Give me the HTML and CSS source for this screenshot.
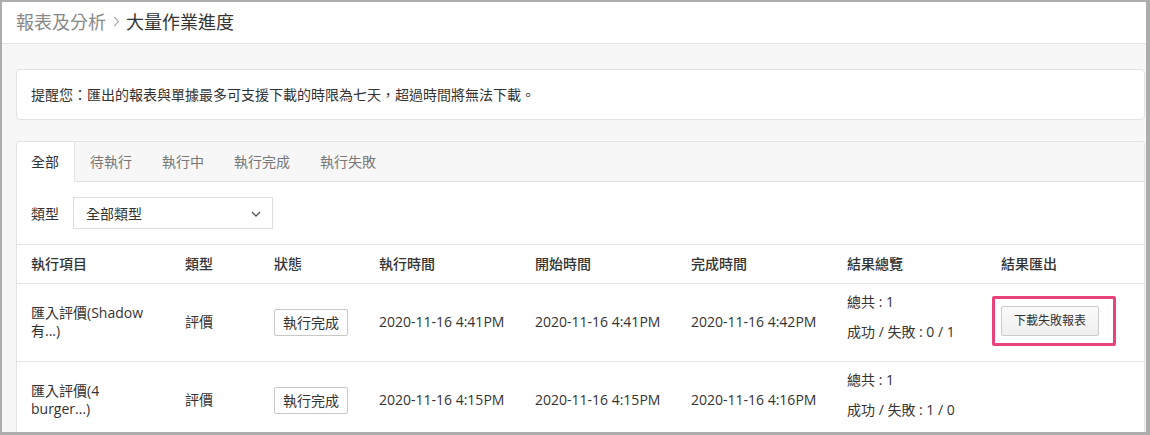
FILE: index.html
```html
<!DOCTYPE html>
<html lang="zh-Hant">
<head>
<meta charset="utf-8">
<title>大量作業進度</title>
<link rel="stylesheet" href="styles.css">
</head>
<body>
<div class="frame">
  <header class="topbar">
    <nav class="crumbs">
      <span class="crumb-parent">報表及分析</span>
      <svg class="crumb-sep" width="7" height="11" viewBox="0 0 7 11"><path d="M1.2 1 L5.6 5.5 L1.2 10" fill="none" stroke="#aaa" stroke-width="1.1"/></svg>
      <span class="crumb-current">大量作業進度</span>
    </nav>
  </header>
  <main class="content">
    <div class="notice">提醒您：匯出的報表與單據最多可支援下載的時限為七天，超過時間將無法下載。</div>
    <section class="panel">
      <div class="tabs">
        <div class="tab active">全部</div>
        <div class="tab">待執行</div>
        <div class="tab">執行中</div>
        <div class="tab">執行完成</div>
        <div class="tab">執行失敗</div>
      </div>
      <div class="filter">
        <span class="filter-label">類型</span>
        <div class="select">
          <span>全部類型</span>
          <svg width="10" height="6" viewBox="0 0 10 6"><path d="M1 1 L5 5 L9 1" fill="none" stroke="#555" stroke-width="1.3"/></svg>
        </div>
      </div>
      <table class="jobs">
        <colgroup>
          <col class="c1"><col class="c2"><col class="c3"><col class="c4"><col class="c5"><col class="c6"><col class="c7"><col>
        </colgroup>
        <thead>
          <tr><th>執行項目</th><th>類型</th><th>狀態</th><th>執行時間</th><th>開始時間</th><th>完成時間</th><th>結果總覽</th><th>結果匯出</th></tr>
        </thead>
        <tbody>
          <tr>
            <td class="name">匯入評價(Shadow 有...)</td>
            <td>評價</td>
            <td><span class="status">執行完成</span></td>
            <td>2020-11-16 4:41PM</td>
            <td>2020-11-16 4:41PM</td>
            <td>2020-11-16 4:42PM</td>
            <td><p class="sum">總共 : 1</p><p class="sum last">成功 / 失敗 : 0 / 1</p></td>
            <td><span class="dl">下載失敗報表</span></td>
          </tr>
          <tr>
            <td class="name">匯入評價(4 burger...)</td>
            <td>評價</td>
            <td><span class="status">執行完成</span></td>
            <td>2020-11-16 4:15PM</td>
            <td>2020-11-16 4:15PM</td>
            <td>2020-11-16 4:16PM</td>
            <td><p class="sum">總共 : 1</p><p class="sum last">成功 / 失敗 : 1 / 0</p></td>
            <td></td>
          </tr>
        </tbody>
      </table>
    </section>
  </main>
</div>
</body>
</html>
```
FILE: styles.css
```css
* { box-sizing: border-box; }
html, body { margin: 0; padding: 0; }
body {
  font-family: "Open Sans", "Noto Sans CJK TC", sans-serif;
  font-size: 14px;
  color: #333;
  background: #fff;
}
.frame {
  width: 1150px;
  height: 435px;
  border-style: solid;
  border-color: #adadad;
  border-width: 2px 4px 3px 2px;
  overflow: hidden;
  background: #f7f7f7;
  display: flex;
  flex-direction: column;
}
.topbar {
  height: 42px;
  flex: none;
  background: #fff;
  border-bottom: 1px solid #e2e2e2;
  padding: 0 0 2px 14px;
  display: flex;
  align-items: center;
}
.crumbs {
  display: flex;
  align-items: center;
  font-size: 18px;
  line-height: 24px;
}
.crumb-parent { color: #888; }
.crumb-sep { margin: 0 6px 0 7px; }
.crumb-current { color: #333; }

.content {
  flex: 1;
  padding: 25px 1px 0 14px;
  min-height: 0;
}
.notice {
  background: #fff;
  border: 1px solid #e3e3e3;
  border-radius: 4px;
  padding: 15px 14px 14px;
  line-height: 20px;
  margin-bottom: 21px;
}
.panel {
  background: #fff;
  border: 1px solid #e3e3e3;
  border-bottom: none;
  border-radius: 4px 4px 0 0;
  overflow: hidden;
}
.tabs {
  display: flex;
  background: #f7f7f7;
  border-bottom: 1px solid #e3e3e3;
  height: 40px;
}
.tab {
  padding: 0 15px;
  line-height: 39px;
  color: #777;
}
.tab:first-child { padding-left: 14px; }
.tab.active {
  background: #fff;
  color: #333;
  border-right: 1px solid #e3e3e3;
  height: 40px;
}
.filter {
  display: flex;
  align-items: center;
  padding: 15px 14px;
}
.filter-label { margin-right: 14px; }
.select {
  width: 200px;
  height: 32px;
  border: 1px solid #ddd;
  display: flex;
  align-items: center;
  justify-content: space-between;
  padding: 0 11px 0 12px;
}
.select svg { margin-top: 1px; }

.jobs {
  width: 100%;
  border-collapse: collapse;
  table-layout: fixed;
  border-top: 1px solid #e6e6e6;
}
.jobs col.c1 { width: 154px; }
.jobs col.c2 { width: 89px; }
.jobs col.c3 { width: 105px; }
.jobs col.c4 { width: 156px; }
.jobs col.c5 { width: 156px; }
.jobs col.c6 { width: 156px; }
.jobs col.c7 { width: 154px; }
.jobs th {
  text-align: left;
  font-weight: 500;
  padding: 9px 14px;
  line-height: 20px;
  border-bottom: 1px solid #e6e6e6;
}
.jobs td {
  padding: 8px 14px 9px;
  line-height: 20px;
  vertical-align: middle;
  border-bottom: 1px solid #e6e6e6;
}
.jobs td.name { line-height: 18px; }
.sum { margin: 0 0 10px; line-height: 20px; }
.status {
  display: inline-block;
  border: 1px solid #c8c8c8;
  border-radius: 2px;
  padding: 2px 8px;
  line-height: 21px;
}
.dl {
  position: relative;
  display: inline-block;
  font-size: 12px;
  line-height: 18px;
  padding: 5px 12px;
  border: 1px solid #ccc;
  border-radius: 2px;
  background: linear-gradient(#fafafa, #efefef);
  color: #333;
  margin-top: -3px;
}
.dl::after {
  content: "";
  position: absolute;
  top: -11px;
  bottom: -11px;
  left: -10px;
  right: -18px;
  border: 3px solid #e8437a;
  border-radius: 2px;
}
```
